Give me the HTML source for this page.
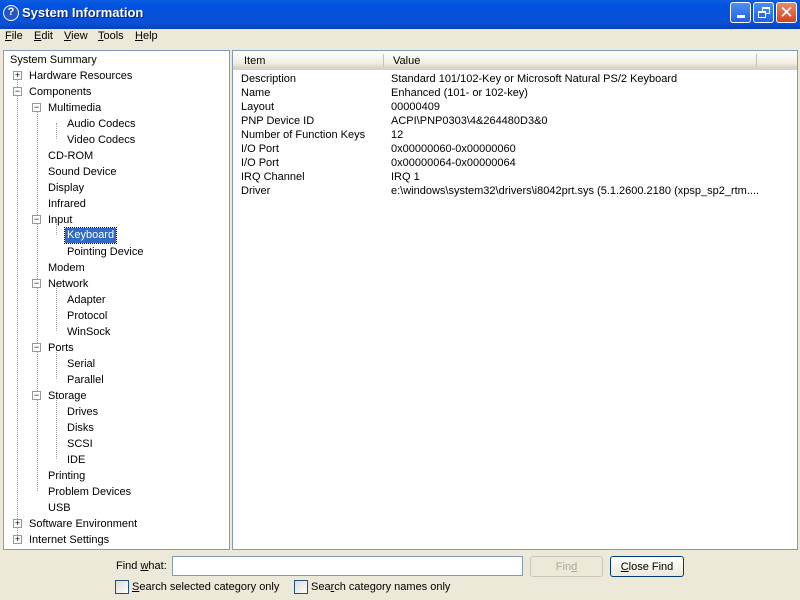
<!DOCTYPE html>
<html><head><meta charset="utf-8"><style>
*{margin:0;padding:0;box-sizing:border-box}
body{width:800px;height:600px;background:#ece9d8;font-family:"Liberation Sans",sans-serif;font-size:11px;color:#000;position:relative;overflow:hidden}
.title{position:absolute;left:0;top:0;width:800px;height:29px;background:linear-gradient(#0a5ce0,#0053e0 20%,#0a4fd6 80%,#0442b8);}
.title .t{position:absolute;left:22px;top:5px;color:#fff;font-weight:bold;font-size:13px;text-shadow:1px 1px #0a1e6e}
.ico{position:absolute;left:3px;top:5px;width:16px;height:16px;border-radius:50%;background:#2458c8;border:1.5px solid #fff;color:#fff;font-weight:bold;font-size:11px;text-align:center;line-height:13px}
.btn{position:absolute;top:2px;width:21px;height:21px;border:1px solid #fff;border-radius:3px;background:linear-gradient(#4d8ff5,#2160e0)}
.menu{position:absolute;top:29px;left:0;width:800px;height:18px}
.menu span{position:absolute;top:0;line-height:13px}
.pane{position:absolute;background:#fff;border:1px solid #7f9db9}
.it{position:absolute;white-space:nowrap;line-height:16px;height:16px}
.box{position:absolute;width:9px;height:9px;border:1px solid #919b9c;background:#fff;font-size:9px;line-height:7px;text-align:center;color:#000}
.row{position:absolute;left:8px;white-space:nowrap;line-height:14px}
.vl{position:absolute;border-left:1px dotted #a0a0a0;width:0}
</style></head><body>
<div class="title"><div class="ico">?</div><div class="t">System Information</div>
<div class="btn" style="left:730px"><div style="position:absolute;left:6px;top:12px;width:8px;height:3px;background:#fff"></div></div>
<div class="btn" style="left:753px"><div style="position:absolute;left:8px;top:4px;width:8px;height:7px;border:1px solid #fff;border-top-width:2px"></div><div style="position:absolute;left:4px;top:8px;width:8px;height:7px;border:1px solid #fff;border-top-width:2px;background:#2e6ce8"></div></div>
<div class="btn" style="left:776px;background:linear-gradient(#e88a6a,#d6411e);color:#fff;font-size:17px;text-align:center;line-height:19px">✕</div>
</div>
<div class="menu"><span style="left:5px;top:1px"><u>F</u>ile</span><span style="left:34px;top:1px"><u>E</u>dit</span><span style="left:64px;top:1px"><u>V</u>iew</span><span style="left:98px;top:1px"><u>T</u>ools</span><span style="left:135px;top:1px"><u>H</u>elp</span></div>

<div class="pane" style="left:3px;top:50px;width:227px;height:500px">
<div class="vl" style="left:13px;top:24px;height:464px"></div>
<div class="vl" style="left:33px;top:56px;height:384px"></div>
<div class="vl" style="left:52px;top:72px;height:16px"></div>
<div class="vl" style="left:52px;top:168px;height:16px"></div>
<div class="vl" style="left:52px;top:232px;height:48px"></div>
<div class="vl" style="left:52px;top:296px;height:32px"></div>
<div class="vl" style="left:52px;top:344px;height:64px"></div>
</div>
<div style="position:absolute;left:3px;top:51px;width:227px;height:498px;overflow:hidden">
<div class="it" style="left:7px;top:1px">System Summary</div>
<div class="box" style="left:10px;top:20px">+</div><div class="it" style="left:26px;top:17px">Hardware Resources</div>
<div class="box" style="left:10px;top:36px">−</div><div class="it" style="left:26px;top:33px">Components</div>
<div class="box" style="left:29px;top:52px">−</div><div class="it" style="left:45px;top:49px">Multimedia</div>
<div class="it" style="left:64px;top:65px">Audio Codecs</div>
<div class="it" style="left:64px;top:81px">Video Codecs</div>
<div class="it" style="left:45px;top:97px">CD-ROM</div>
<div class="it" style="left:45px;top:113px">Sound Device</div>
<div class="it" style="left:45px;top:129px">Display</div>
<div class="it" style="left:45px;top:145px">Infrared</div>
<div class="box" style="left:29px;top:164px">−</div><div class="it" style="left:45px;top:161px">Input</div>
<div class="it" style="left:62px;top:177px;height:15px;line-height:15px;padding:0 2px;background:#316ac5;color:#fff;outline:1px dotted #000">Keyboard</div>
<div class="it" style="left:64px;top:193px">Pointing Device</div>
<div class="it" style="left:45px;top:209px">Modem</div>
<div class="box" style="left:29px;top:228px">−</div><div class="it" style="left:45px;top:225px">Network</div>
<div class="it" style="left:64px;top:241px">Adapter</div>
<div class="it" style="left:64px;top:257px">Protocol</div>
<div class="it" style="left:64px;top:273px">WinSock</div>
<div class="box" style="left:29px;top:292px">−</div><div class="it" style="left:45px;top:289px">Ports</div>
<div class="it" style="left:64px;top:305px">Serial</div>
<div class="it" style="left:64px;top:321px">Parallel</div>
<div class="box" style="left:29px;top:340px">−</div><div class="it" style="left:45px;top:337px">Storage</div>
<div class="it" style="left:64px;top:353px">Drives</div>
<div class="it" style="left:64px;top:369px">Disks</div>
<div class="it" style="left:64px;top:385px">SCSI</div>
<div class="it" style="left:64px;top:401px">IDE</div>
<div class="it" style="left:45px;top:417px">Printing</div>
<div class="it" style="left:45px;top:433px">Problem Devices</div>
<div class="it" style="left:45px;top:449px">USB</div>
<div class="box" style="left:10px;top:468px">+</div><div class="it" style="left:26px;top:465px">Software Environment</div>
<div class="box" style="left:10px;top:484px">+</div><div class="it" style="left:26px;top:481px">Internet Settings</div>
</div>

<div class="pane" style="left:232px;top:50px;width:566px;height:500px;overflow:hidden">
<div style="position:absolute;left:0;top:0;width:566px;height:19px;background:linear-gradient(#fff,#f1efe2 70%,#d6d2c2);border-bottom:2px solid #d6d3ce"></div>
<div style="position:absolute;left:150px;top:3px;width:1px;height:13px;background:#c7c5b2"></div>
<div style="position:absolute;left:523px;top:3px;width:1px;height:13px;background:#c7c5b2"></div>
<div style="position:absolute;left:11px;top:4px">Item</div>
<div style="position:absolute;left:160px;top:4px">Value</div>
<div style="position:absolute;left:0;top:21px;width:566px">
<div class="row" style="top:0">Description</div><div class="row" style="top:0;left:158px">Standard 101/102-Key or Microsoft Natural PS/2 Keyboard</div>
<div class="row" style="top:14px">Name</div><div class="row" style="top:14px;left:158px">Enhanced (101- or 102-key)</div>
<div class="row" style="top:28px">Layout</div><div class="row" style="top:28px;left:158px">00000409</div>
<div class="row" style="top:42px">PNP Device ID</div><div class="row" style="top:42px;left:158px">ACPI\PNP0303\4&amp;264480D3&amp;0</div>
<div class="row" style="top:56px">Number of Function Keys</div><div class="row" style="top:56px;left:158px">12</div>
<div class="row" style="top:70px">I/O Port</div><div class="row" style="top:70px;left:158px">0x00000060-0x00000060</div>
<div class="row" style="top:84px">I/O Port</div><div class="row" style="top:84px;left:158px">0x00000064-0x00000064</div>
<div class="row" style="top:98px">IRQ Channel</div><div class="row" style="top:98px;left:158px">IRQ 1</div>
<div class="row" style="top:112px">Driver</div><div class="row" style="top:112px;left:158px">e:\windows\system32\drivers\i8042prt.sys (5.1.2600.2180 (xpsp_sp2_rtm....</div>
</div></div>

<div style="position:absolute;left:116px;top:560px">Find <u>w</u>hat:</div>
<div style="position:absolute;left:172px;top:556px;width:351px;height:20px;background:#fff;border:1px solid #7f9db9"></div>
<div style="position:absolute;left:530px;top:556px;width:73px;height:21px;border:1px solid #c9c7ba;border-radius:3px;color:#aca899;text-align:center;line-height:20px">Fin<u>d</u></div>
<div style="position:absolute;left:610px;top:556px;width:74px;height:21px;border:1px solid #003c74;border-radius:3px;background:linear-gradient(#fff,#ece9d8);text-align:center;line-height:20px"><u>C</u>lose Find</div>
<div style="position:absolute;left:115px;top:580px;width:14px;height:14px;border:1px solid #1c5180;background:linear-gradient(135deg,#dcdbd5,#fff)"></div>
<div style="position:absolute;left:132px;top:581px"><u>S</u>earch selected category only</div>
<div style="position:absolute;left:294px;top:580px;width:14px;height:14px;border:1px solid #1c5180;background:linear-gradient(135deg,#dcdbd5,#fff)"></div>
<div style="position:absolute;left:311px;top:581px">Sea<u>r</u>ch category names only</div>
</body></html>
